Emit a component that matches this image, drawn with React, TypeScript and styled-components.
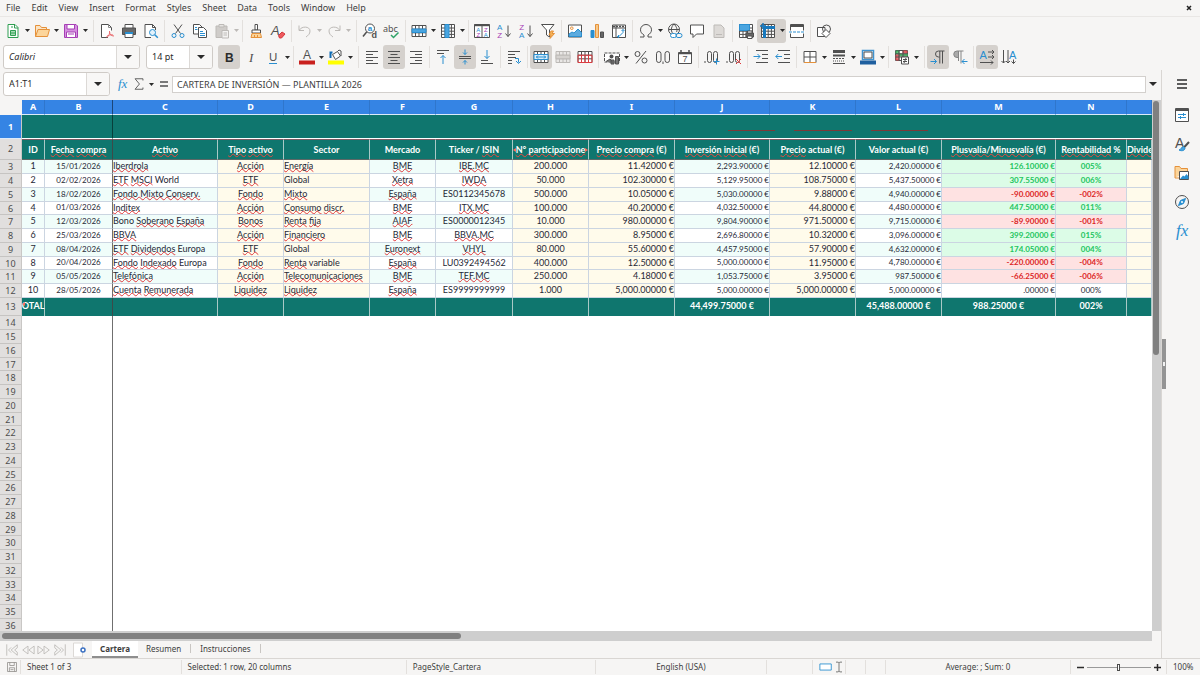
import React from "react";
import styled, { createGlobalStyle, css } from "styled-components";

const C = {
  chrome: "#f6f5f4",
  line: "#d9d6d3",
  ink: "#3d3d3d",
  teal: "#0f766e",
  blue: "#3584e4",
  held: "#d5d1cd",
  k: "#505050",
  b: "#2a8fd0",
  grid: "#cbd5e1",
};

const GlobalStyle = createGlobalStyle`
  * { box-sizing: border-box; }
  html, body, #root { height: 100%; margin: 0; }
  body { background: ${C.chrome}; overflow: hidden; }
  button, input, select { font: inherit; color: inherit; }
`;

const Window = styled.div`
  display: flex;
  flex-direction: column;
  height: 100%;
  background: ${C.chrome};
  color: ${C.ink};
  font: 9px/12px "Noto Sans", sans-serif;
`;

/* ---------- menu bar ---------- */
const MenuBar = styled.nav`
  display: flex;
  align-items: center;
  gap: 11px;
  height: 17px;
  padding: 0 5px 0 6px;
  border-bottom: 1px solid #e9e7e5;
`;
const MenuButton = styled.button`
  padding: 0;
  border: 0;
  background: none;
`;
const CloseButton = styled(MenuButton)`
  margin-left: auto;
  width: 12px;
  height: 12px;
  display: grid;
  place-items: center;
`;

/* ---------- toolbars ---------- */
const Toolbar = styled.div<{ $h: number }>`
  display: flex;
  align-items: center;
  flex: none;
  height: ${(p) => p.$h}px;
  padding-left: 2px;
`;
const ToolButton = styled.button<{ $held?: boolean }>`
  display: grid;
  place-items: center;
  flex: none;
  width: 22px;
  height: 24px;
  padding: 0;
  border: 0;
  border-radius: 3px;
  background: ${(p) => (p.$held ? C.held : "none")};
`;
const CaretButton = styled(ToolButton)`
  width: 7px;
`;
const Joined = styled.span<{ $held?: boolean }>`
  display: flex;
  flex: none;
  border-radius: 3px;
  background: ${(p) => (p.$held ? C.held : "none")};
`;
const Divider = styled.span<{ $wide?: boolean }>`
  flex: none;
  width: ${(p) => (p.$wide ? 7 : 5)}px;
  height: 22px;
  padding-left: ${(p) => (p.$wide ? 4 : 2)}px;
  &::before {
    content: "";
    display: block;
    width: 1px;
    height: 100%;
    background: #e3e0dd;
  }
`;
const Combo = styled.label<{ $w: number }>`
  display: flex;
  flex: none;
  width: ${(p) => p.$w}px;
  height: 24px;
  margin: 0 5px 0 1px;
  border: 1px solid #cfcbc7;
  border-radius: 3px;
  background: #fff;
  overflow: hidden;
`;
const comboField = css`
  flex: 1;
  min-width: 0;
  border: 0;
  outline: 0;
  padding: 0 5px;
  background: none;
  color: #2b2b2b;
  appearance: none;
`;
const ComboSelect = styled.select<{ $italic?: boolean }>`
  ${comboField}
  font-style: ${(p) => (p.$italic ? "italic" : "normal")};
`;
const ComboInput = styled.input`
  ${comboField}
`;
const ComboArrow = styled.span`
  display: grid;
  place-items: center;
  width: 23px;
  border-left: 1px solid #dcd9d6;
  background: #f8f7f6;
`;

/* ---------- body ---------- */
const Body = styled.div`
  display: flex;
  flex: 1;
  min-height: 0;
`;
const Main = styled.main`
  display: flex;
  flex-direction: column;
  flex: 1;
  min-width: 0;
  border-right: 1px solid ${C.line};
`;
const FormulaBar = styled.div`
  display: flex;
  align-items: center;
  flex: none;
  height: 30px;
  padding: 0 1px 2px 2px;
`;
const FormulaButton = styled(ToolButton)<{ $w: number }>`
  width: ${(p) => p.$w}px;
`;
const FormulaInput = styled.input`
  flex: 1;
  min-width: 0;
  height: 17px;
  padding: 0 4px;
  border: 1px solid #d3d0cd;
  outline: 0;
  background: #fff;
`;
const SheetArea = styled.div`
  display: flex;
  flex: 1;
  min-height: 0;
`;
const SheetClip = styled.div`
  flex: 1;
  min-width: 0;
  overflow: hidden;
  background: #fff;
`;
const VerticalBar = styled.div`
  flex: none;
  width: 9px;
  padding: 1px 2px 0 1px;
  background: #cecece;
`;
const VerticalThumb = styled.div`
  height: 48%;
  border-radius: 3px;
  background: #808080;
`;
const HorizontalBar = styled.div`
  flex: none;
  height: 10px;
  margin-right: 9px;
  padding: 2px;
  background: #cecece;
`;
const HorizontalThumb = styled.div`
  width: 40%;
  height: 6px;
  border-radius: 3px;
  background: #808080;
`;

/* ---------- sheet ---------- */
const Sheet = styled.table`
  width: 100%;
  table-layout: fixed;
  border-collapse: separate;
  border-spacing: 0;
  font: 9px/12px Lato, sans-serif;
  color: #1f2937;
  td, th { padding: 0; white-space: nowrap; }
`;
const ColumnRow = styled.tr`
  height: 15px;
`;
const Corner = styled.td`
  background: ${C.chrome};
`;
const ColumnHead = styled.th<{ $frozen?: boolean }>`
  font: bold 9px/14px "Noto Sans", sans-serif;
  color: #fff;
  background: ${C.blue};
  border-bottom: 1px solid #dcebfb;
  border-right: 1px solid ${(p) => (p.$frozen ? "#1c4679" : "#2f76cc")};
`;
const RowHead = styled.th<{ $active?: boolean }>`
  font: ${(p) => (p.$active ? "bold" : "normal")} 9px/12px "Noto Sans", sans-serif;
  color: ${(p) => (p.$active ? "#fff" : "#4d4d4d")};
  background: ${(p) => (p.$active ? C.blue : "#e1dfde")};
  border-right: 1px solid #c9c7c5;
  border-bottom: 1px solid ${(p) => (p.$active ? "#dcebfb" : "#c6c4c2")};
`;
const TitleRow = styled.tr`
  height: 24px;
`;
const TitleCell = styled.td<{ $frozen?: boolean }>`
  background: ${C.teal};
  border-bottom: 1px solid #fff;
  ${(p) => p.$frozen && "border-right: 1px solid #083f3b;"}
`;
const TitleMarks = styled.div`
  display: flex;
  justify-content: flex-end;
  gap: 19px;
  padding: 8px 224px 0 0;
`;
const TitleMark = styled.span<{ $w: number }>`
  width: ${(p) => p.$w}px;
  border-bottom: 1px solid #7d3a38;
`;
const HeadRow = styled.tr`
  height: 21px;
`;
const HeadCell = styled.th<{ $frozen?: boolean; $start?: boolean }>`
  overflow: hidden;
  color: #fff;
  background: ${C.teal};
  border-top: 1px solid #7f5a62;
  border-bottom: 1px solid #5d6866;
  border-right: 1px solid ${(p) => (p.$frozen ? "#3d4a49" : "#a9c9c6")};
  text-align: ${(p) => (p.$start ? "left" : "center")};
`;
const DataBody = styled.tbody`
  tr { height: 14px; }
  tr:nth-child(4n) { height: 13px; }
  tr:nth-child(4n) td, tr:nth-child(4n) th { line-height: 11px; }
`;
const DataCell = styled.td<{
  $bg: string;
  $align: string;
  $small?: boolean;
  $bold?: boolean;
  $color?: string;
  $frozen?: boolean;
}>`
  overflow: hidden;
  background: ${(p) => p.$bg};
  text-align: ${(p) => p.$align};
  vertical-align: top;
  font-size: ${(p) => (p.$small ? 8 : 9)}px;
  font-weight: ${(p) => (p.$bold ? "bold" : "normal")};
  color: ${(p) => p.$color ?? "inherit"};
  border-right: 1px solid ${(p) => (p.$frozen ? "#6f6f6f" : C.grid)};
  border-bottom: 1px solid ${C.grid};
`;
const TotalRow = styled.tr`
  height: 18px;
`;
const TotalCell = styled.td<{ $frozen?: boolean }>`
  color: #fff;
  background: ${C.teal};
  border-right: 1px solid ${(p) => (p.$frozen ? "#3d4a49" : "#a9c9c6")};
  text-align: center;
  font-weight: bold;
  line-height: 16px;
  vertical-align: top;
`;
const EmptyCell = styled.td<{ $frozen?: boolean }>`
  ${(p) => p.$frozen && "border-right: 1px solid #6f6f6f;"}
`;
const Misspelt = styled.span`
  text-decoration: underline wavy #e0383b 1px;
  text-decoration-skip-ink: none;
  text-underline-offset: -1px;
  ${HeadCell} & {
    text-decoration-color: #f0483f;
    text-underline-offset: 0;
  }
`;
const Clipped = styled.div`
  position: relative;
  display: flex;
  justify-content: center;
`;
const ClipMark = styled.svg<{ $end?: boolean }>`
  position: absolute;
  top: 4px;
  ${(p) => (p.$end ? "right: 0; transform: scaleX(-1);" : "left: 0;")}
`;

/* ---------- tabs ---------- */
const Tabs = styled.div`
  display: flex;
  align-items: stretch;
  flex: none;
  height: 17px;
  padding-left: 4px;
  font-size: 8px;
`;
const TabNav = styled.button<{ $w: number }>`
  display: grid;
  place-items: center;
  width: ${(p) => p.$w}px;
  padding: 0;
  border: 0;
  background: none;
`;
const Tab = styled.button<{ $active?: boolean }>`
  padding: 0 8px;
  border: 0;
  border-bottom: 2px solid ${(p) => (p.$active ? "#8e8e8e" : "transparent")};
  background: ${(p) => (p.$active ? "#fff" : "none")};
  font-weight: ${(p) => (p.$active ? "bold" : "normal")};
  line-height: 13px;
`;
const TabLine = styled.span`
  width: 1px;
  height: 9px;
  margin: 3px 1px 0;
  background: #c9c6c3;
`;

/* ---------- sidebar ---------- */
const Sidebar = styled.aside`
  display: flex;
  flex: none;
  width: 38px;
`;
const Grip = styled.span`
  align-self: center;
  display: grid;
  place-items: center;
  width: 4px;
  height: 50px;
  background: #949494;
  &::before {
    content: "";
    width: 2px;
    height: 4px;
    background: #f2f2f2;
  }
`;
const SidebarButtons = styled.div`
  display: flex;
  flex-direction: column;
  align-items: center;
  flex: 1;
  gap: 5px;
  padding: 2px 6px 0 4px;
  button:first-child { margin-bottom: 2px; }
`;

/* ---------- status bar ---------- */
const StatusBar = styled.footer`
  display: flex;
  align-items: center;
  flex: none;
  height: 17px;
  border-top: 1px solid ${C.line};
  font-size: 8px;
`;
const StatusItem = styled.div<{ $grow?: number; $w?: number; $center?: boolean }>`
  display: flex;
  align-items: center;
  justify-content: ${(p) => (p.$center ? "center" : "flex-start")};
  flex: ${(p) => (p.$grow ? `${p.$grow} 1 0` : `0 0 ${p.$w}px`)};
  height: 14px;
  padding-left: ${(p) => (p.$center ? 0 : 6)}px;
  border-right: 1px solid #e3e0dd;
  white-space: nowrap;
  &:last-child { border-right: 0; }
`;
const ZoomButton = styled.button`
  display: grid;
  place-items: center;
  width: 13px;
  height: 12px;
  padding: 0;
  border: 0;
  background: none;
`;
const ZoomSlider = styled.input`
  appearance: none;
  width: 64px;
  height: 10px;
  margin: 0;
  background: linear-gradient(#9a9a9a, #9a9a9a) center / 100% 1px no-repeat;
  &::-webkit-slider-thumb {
    appearance: none;
    width: 3px;
    height: 7px;
    border: 1px solid #4d4d4d;
    background: #fff;
  }
`;

/* ---------- icons ---------- */
const Drawing = styled.svg`
  display: block;
  overflow: visible;
`;

const O = "#e5913a";
const P = "#a63fb5";
const G = "#bdbab7";

const gridLines = "M1 2.5h14v11H1zM1 6.2h14M1 9.8h14M4.5 2.5v11M8 2.5v11M11.5 2.5v11";
const sheetGrid = "M1.5 1.5h13v13h-13zM1.5 5h13M1.5 8.2h13M1.5 11.4h13M5 1.5v13M8.2 1.5v13M11.4 1.5v13";

const glyph = (x: number, y: number, s: string, size: number, fill: string, extra: object = {}) => (
  <text x={x} y={y} fontSize={size} fill={fill} stroke="none" fontFamily="Liberation Sans, sans-serif" {...extra}>
    {s}
  </text>
);

const art: Record<string, React.ReactNode> = {
  newDoc: (<g stroke="#2f9e52"><path d="M3 1.5h7l3 3v10H3z" fill="#fff" /><path d="M9.5 1.5V5H13" /><path d="M5.5 7.5h5v5h-5zM5.5 10h5" fill="#a7dcb5" /><path d="M6 4h2" /></g>),
  open: (<g stroke={O}><path d="M1.5 13.5V2.5h4.5l1.500 2h5v2" fill="#fbe3c3" /><path d="M1.500 13.500l2.500-7h11.500l-2 7z" fill="#fcd59b" /></g>),
  save: (<g stroke={P}><path d="M1.500 1.500h11.500l1.500 1.500v11.500h-13z" fill="#d58fe0" /><path d="M4 1.500h7.500v4.500H4z" fill="#fff" /><path d="M3.500 9h9v5.500h-9z" fill="#fff" /><path d="M5 11h6" /></g>),
  pdf: (<g stroke={C.k}><path d="M9 14.500H2.500v-13h7l3 3v3" fill="#fff" /><path d="M9.500 1.500v3h3" stroke="#8a8a8a" /><path d="M8 14.500c2-2 3-4 2.500-6.500M10.500 8.500c0 3 2 4.500 4.500 4.500M7.500 13.500c2-1.500 4-2 6.500-1.500" stroke="#ea6a6e" /></g>),
  print: (<g stroke={C.k}><path d="M4 5V1.500h8V5" fill="#fff" /><path d="M1.500 5h13v6.500h-13z" fill="#686868" /><path d="M4 9.500h8v5H4z" fill="#fff" /><path d="M4 10h8" stroke={C.b} strokeWidth="2" /></g>),
  preview: (<g stroke={C.k}><path d="M8 14.500H2v-13h7.500l3 3V7" fill="#fff" /><path d="M9.500 1.500v3h3" /><circle cx="9.500" cy="9.500" r="3" stroke={C.b} fill="#e3f2fc" /><path d="M11.800 11.800l3 3" stroke={C.b} strokeWidth="1.500" /></g>),
  cut: (<g><path d="M4 1.500l6.500 9M12 1.500l-6.500 9" stroke={C.k} /><circle cx="4" cy="12.500" r="2" stroke={C.b} /><circle cx="12" cy="12.500" r="2" stroke={C.b} /></g>),
  copy: (<g stroke={C.k}><path d="M1.500 1.500h6l2.500 2.500v7h-8.500z" fill="#fff" /><path d="M6.500 4.500h5l3 3v7h-8z" fill="#fff" /><path d="M3 4.500h2M3 6.500h2.500M8 8.500h3M8 10.500h5M8 12.500h5" stroke={C.b} /></g>),
  paste: (<g stroke={G}><path d="M2 3h11v11.500H2z" fill="#cfccc9" /><path d="M5 1.500h5v2.500H5z" fill="#e6e4e2" /><path d="M8 7.500h6.500v7.500H8z" fill="#f3f2f1" /><path d="M9.500 10h3.500M9.500 12h3.500" /></g>),
  brush: (<g stroke={C.k}><path d="M7 1.500h2.500v5.500H7z" fill="#fff" /><path d="M4 7h8.500v3H4z" fill="#fff" /><path d="M4 10.500h8.500l1 4H3z" fill="#fbd49a" stroke={O} /><path d="M6.500 12v2.500M9.500 12v2.500" stroke={O} /></g>),
  clear: (<g>{glyph(1, 12, "A", 13, C.k, { fontStyle: "italic" })}<path d="M8.500 12.500l3.500-3.500 3 2-3.500 4h-2z" fill="#ef5a5e" stroke="#d2383c" /></g>),
  undo: (<path d="M2 2.500v5h5M2.500 7c2-4 10.500-4 10.500 1 0 3-2 4.500-4 6" stroke={G} />),
  redo: (<path d="M14 2.500v5H9M13.500 7C11.500 3 3 3 3 8c0 3 2 4.500 4 6" stroke={G} />),
  find: (<g><circle cx="8" cy="5.500" r="4.500" stroke={C.k} fill="#fff" /><path d="M4.800 8.800L1 13.500" stroke={C.k} strokeWidth="1.500" />{glyph(5.8, 8, "a", 8, C.b, { fontWeight: 700 })}{glyph(9.5, 15, "d", 9, C.k, { fontWeight: 700 })}</g>),
  spell: (<g>{glyph(-1, 9, "abc", 9, C.k, { fontFamily: "Noto Sans, sans-serif" })}<path d="M7 12l2.500 2.500 5-5" stroke="#2fa368" strokeWidth="1.500" /></g>),
  rows: (<g stroke={C.k}><path d={gridLines} fill="#fff" /><path d="M1 6h14v3.500H1z" fill="#4aa5e0" stroke={C.b} /></g>),
  cols: (<g stroke={C.k}><path d={sheetGrid} fill="#fff" /><path d="M5 1.500h4v13H5z" fill="#4aa5e0" stroke={C.b} /></g>),
  sort: (<g><path d="M.5 1.500h15v13H.5zM8 1.500v13" stroke={C.k} fill="#fff" /><path d="M.5 2.200h15" stroke={C.k} strokeWidth="2" />{glyph(2.200, 8.500, "A", 6, C.b)}{glyph(2.400, 14, "Z", 6, P)}{glyph(9.900, 8.500, "Z", 6, P)}{glyph(9.700, 14, "A", 6, C.b)}</g>),
  asc: (<g>{glyph(1, 7, "A", 8, C.b)}{glyph(1.300, 15, "Z", 8, P)}<path d="M12 2.500v11M9.500 10.500l2.500 3 2.500-3" stroke={C.k} /></g>),
  desc: (<g>{glyph(1.300, 7, "Z", 8, P)}{glyph(1, 15, "A", 8, C.b)}<path d="M12 2.500v11M9.500 10.500l2.500 3 2.500-3" stroke={C.k} /></g>),
  filter: (<g><path d="M1.500 1.500h12.500l-4.500 5.500v7l-3-2V7z" stroke={C.k} fill="#fff" /><path d="M11 8l-2 4h2l-1 3.500 4.500-5h-2.500l1.500-2.500z" fill="#f5b55a" stroke={O} /></g>),
  image: (<g><path d="M1.500 2h13v12h-13z" stroke={C.k} fill="#fff" /><circle cx="4.800" cy="5.200" r="1.300" stroke={O} /><path d="M2 13.500V11l3-2 2 1 4-4 3.500 3.500v4z" fill="#5cabdf" stroke={C.b} /></g>),
  chart: (<g><path d="M2 7.500h3v7H2z" fill={C.b} stroke={C.b} /><path d="M6.500 1.500h3v13h-3z" fill="#f8c98a" stroke={O} /><path d="M11.500 9h3v5.500h-3z" fill="#666" stroke={C.k} /></g>),
  pivot: (<g stroke={C.k}><path d="M1.500 2h13v12.500h-13zM1.500 5h13M5 2v12.500" fill="#fff" /><path d="M2 3.500h12" strokeWidth="1.500" strokeDasharray="2 1" /><path d="M12 6.500v3l-4 4H6.500M10.500 8l1.500-1.500L13.500 8M8 12l-1.500 1.500L8 15" stroke={C.b} /></g>),
  omega: (<path d="M2 14h4v-2C3.800 10.800 2.500 9 2.500 6.800a5.500 5.300 0 0 1 11 0c0 2.200-1.300 4-3.500 5.200v2h4" stroke={C.k} />),
  link: (<g><circle cx="7" cy="6.500" r="5.500" stroke={C.k} /><path d="M1.500 6.500h11M7 1c-3.500 3.500-3.500 7.500 0 11M7 1c3 3 3.500 6 2.500 8" stroke={C.k} /><rect x="3.500" y="10.500" width="6" height="4" rx="2" stroke={C.b} fill="#fff" /><rect x="9" y="10.500" width="6" height="4" rx="2" stroke={C.b} /></g>),
  comment: (<path d="M1.500 2h13v9H7.500l-3.500 3.500V11H1.500z" stroke={C.k} fill="#fff" />),
  header: (<path d="M3 2h7l3 3v9.500H3zM5 11.500h6" stroke={G} fill="#dddad7" />),
  printArea: (<g stroke={C.k}><path d={sheetGrid} fill="#fff" /><path d="M1.500 1.500h10v6h-10z" fill="#4aa5e0" stroke={C.b} /><path d="M8 10h7.500v4H8z" fill="#666" /><path d="M9.500 8h4.500v2H9.500zM9.500 13h4.500v2.500H9.500z" fill="#fff" /></g>),
  freeze: (<g stroke={C.k}><path d={sheetGrid} fill="#fff" /><path d="M4 4.500h11M4.500 4v11" stroke="#1778bd" strokeWidth="3" /><path d="M3 0v6M0 3h6" stroke="#1778bd" strokeWidth="1.500" /></g>),
  split: (<g stroke={C.k}><path d="M1.500 1.500h13v13h-13z" fill="#fff" /><path d="M1.500 3h13" strokeWidth="2" /><path d="M0 9h16" stroke="#fff" strokeWidth="3" /><path d="M0 9h16" stroke={C.b} strokeDasharray="3 1" /></g>),
  shapes: (<g stroke={C.k}><path d="M1.500 4.500h7.500v9H1.500z" fill="#fff" /><circle cx="10.500" cy="6" r="4" /><path d="M10 6.500l4 4-4 4-4-4z" fill="#fff" /></g>),
  bold: glyph(4, 12.500, "B", 12, "#2b2b2b", { fontWeight: 700 }),
  italic: glyph(6, 12.500, "I", 13, C.k, { fontStyle: "italic", fontFamily: "Liberation Serif, serif" }),
  underline: (<g>{glyph(4, 11.500, "U", 11.500, C.k)}<path d="M4 14.500h8" stroke={C.b} /></g>),
  fontColor: (<g>{glyph(4, 10, "A", 12, C.k)}<path d="M0 11.500h16v4H0z" fill="#c9211e" /></g>),
  highlight: (<g><path d="M0 11.500h16v4H0z" fill="#ff0" /><path d="M2.500 9V3.500h2" stroke="#0f6cb5" strokeWidth="2" /><path d="M4.500 5.500l5-3 3 4.500-5 3.500zM9.500 2.500l1.500-1.500 2 1v5" stroke={C.k} fill="#fff" /></g>),
  left: (<path d="M2 2.500h12M2 5.500h7M2 8.500h12M2 11.500h7M2 14.500h12" stroke={C.k} />),
  center: (<path d="M2 2.500h12M4.500 5.500h7M2 8.500h12M4.500 11.500h7M2 14.500h12" stroke={C.k} />),
  right: (<path d="M2 2.500h12M7 5.500h7M2 8.500h12M7 11.500h7M2 14.500h12" stroke={C.k} />),
  top: (<g><path d="M2 1.500h12M2 4.500h7" stroke={C.k} /><path d="M8 15V6.500M5.500 9L8 6.500 10.500 9" stroke={C.b} /></g>),
  middle: (<g><path d="M2 7.500h12M2 9.500h12" stroke={C.k} /><path d="M8 .500v5M6 3.500l2 2 2-2M8 15.500v-4M6 13.500l2-2 2 2" stroke={C.b} /></g>),
  bottom: (<g><path d="M2 14.500h12M2 11.500h7" stroke={C.k} /><path d="M8 1v8.500M5.500 7L8 9.500 10.500 7" stroke={C.b} /></g>),
  wrap: (<g><path d="M2 2.500h12M2 5.500h7M2 8.500h8M2 11.500h4M2 14.500h4" stroke={C.k} /><path d="M9 9.500h3.500v4M10 12l2.500 2.500L15 12" stroke={C.b} /></g>),
  merge: (<g stroke={C.k}><path d={gridLines} fill="#fff" /><path d="M1 5.500h14v5H1z" fill="#d8edfa" stroke={C.b} /><path d="M3 8h10M5 6.500L3.500 8 5 9.500M11 6.500L12.500 8 11 9.500" stroke={C.b} /></g>),
  unmerge: (<g stroke={G}><path d={gridLines} fill="#e9e7e5" /><path d="M1 6.200h14v3.600H1z" fill="#d5d2cf" /></g>),
  splitCell: (<g stroke={C.k}><path d={gridLines} fill="#fff" /><path d="M1 6.200h14v7.300H1zM4.500 6.200v7.300M8 6.200v7.300M11.500 6.200v7.300" stroke="#dd3c41" /></g>),
  currency: (<g><path d="M.5 4h15v9H.5z" fill="#fff" stroke={C.k} strokeDasharray="3 1" /><circle cx="7.500" cy="7.500" r="2" fill={C.k} /><path d="M2 12.500l4-2.500 2 2V14M7 11h3v4H7zM11.500 7.500h3v7.500h-3z" fill="#777" stroke={C.k} /></g>),
  percent: (<g stroke={C.k}><path d="M13 2L3 14.500" /><circle cx="4.500" cy="5" r="2.500" /><circle cx="11.500" cy="11.500" r="2.500" /></g>),
  number: (<g stroke={C.k}><rect x="1.500" y="2.500" width="4.500" height="11" rx="2.250" /><rect x="10" y="2.500" width="4.500" height="11" rx="2.250" /><path d="M8 12.500v2.500" /></g>),
  date: (<g><path d="M1.500 3.500h13v11h-13z" stroke={C.k} fill="#fff" /><path d="M1.500 4.500h13M4 1v3M12 1v3" stroke={C.k} strokeWidth="1.500" />{glyph(5.500, 13, "7", 9, C.k)}</g>),
  addDec: (<g stroke={C.k}><path d="M1 12v2" /><rect x="3.500" y="2.500" width="4" height="11" rx="2" /><rect x="9.500" y="2.500" width="4" height="11" rx="2" /><path d="M12.500 9.500v6M9.500 12.500h6" stroke={C.b} /></g>),
  delDec: (<g stroke={C.k}><path d="M1 12v2" /><rect x="3.500" y="2.500" width="4" height="11" rx="2" /><rect x="9.500" y="2.500" width="4" height="11" rx="2" /><path d="M10 10l5 5M15 10l-5 5" stroke="#e0383b" /></g>),
  indent: (<g><path d="M3 1.500h12M9 5.500h6M9 9.500h6M3 13.500h12" stroke={C.k} /><path d="M.5 7.500h6.500M4.500 5L7 7.500 4.500 10" stroke={C.b} /></g>),
  outdent: (<g><path d="M3 1.500h12M9 5.500h6M9 9.500h6M3 13.500h12" stroke={C.k} /><path d="M7 7.500H.800M3.300 5L.800 7.500 3.300 10" stroke={C.b} /></g>),
  borders: (<g stroke={C.k}><path d="M2 2.500h12v11H2zM8 2.500v11M2 8h12" fill="#fff" /><path d="M2 13.500h12" stroke={O} /></g>),
  lineStyle: (<g stroke={C.k}><path d="M2 2.500h12" strokeWidth="3" /><path d="M2 6.500h12" strokeWidth="2" /><path d="M2 9.500h12" strokeDasharray="2 1" /><path d="M2 12h12" strokeDasharray="1 1" /><path d="M2 14.500h12" /></g>),
  lineColor: (<g><path d="M2.500 1.500h11v9h-11z" stroke="#3f93cf" strokeWidth="1.500" fill="#fff" /><path d="M4 3h8v6H4z" stroke={C.k} /><path d="M0 11.500h16v4H0z" fill="#1f5f9f" /></g>),
  conditional: (<g stroke={C.k}><path d="M1.500 1.500h12v10h-12z" fill="#fff" /><path d="M2 2h3v3H2zM5 5h8.500v2H5z" fill="#63c37a" stroke="#3d9e56" /><path d="M2 6h3v5H2zM9 2h4v2H9z" fill="#ee7479" stroke="#d2494e" /><path d="M5 1.500v10M9 1.500v10M1.500 4.800h12M1.500 8h12" /><path d="M7.500 8h7v7h-7z" fill="#fff" /><path d="M9 10.500h4M9 12.500h4M12 9l-2 5" /></g>),
  ltr: (<g><path d="M14.500 2H8.500a3 3 0 0 0 0 6h1M9.800 2v12.500M12.500 2v12.500" stroke={C.k} /><path d="M.5 12.500h6M4 10l2.500 2.500L4 15" stroke={C.b} /></g>),
  rtl: (<g><path d="M11.500 2H5a3 3 0 0 0 0 6.500h1.500V2M9 2v12.500M6.500 2v10" stroke="#858585" fill="#aaa" /><path d="M15.500 12.500H10M12.500 10L10 12.500l2.500 2.500" stroke={C.b} /></g>),
  horizontal: (<g>{glyph(.5, 10, "A", 11, C.b)}<path d="M9 3h6M13 1l2 2-2 2M9 8h6M13 6l2 2-2 2M1 13.500h13M12 11.500l2 2-2 2" stroke={C.k} /></g>),
  vertical: (<g>{glyph(8, 10, "A", 11, C.b)}<path d="M2.500 1v13M.500 12l2 2 2-2M7 1v13M5 12l2 2 2-2M12.500 10.500v4M10.500 12.500l2 2 2-2" stroke={C.k} /></g>),
  fx: glyph(3, 12, "fx", 13, C.b, { fontStyle: "italic", fontFamily: "Liberation Serif, serif" }),
  sum: (<path d="M12.500 4V2H3.500l5 6-5 6h9v-2" stroke={C.k} />),
  equals: (<path d="M4 6h8M4 10h8" stroke={C.k} strokeWidth="1.500" />),
  menu: (<path d="M3 4h10M3 8h10M3 12h10" stroke="#2b2b2b" strokeWidth="1.500" />),
  props: (<g><path d="M1.500 1.500h13v13h-13z" stroke={C.k} fill="#fff" /><path d="M1.500 3h13" stroke={C.k} strokeWidth="2" /><path d="M4 7.500h8M4 10.500h8M9.500 6v3M6.500 9v3" stroke={C.b} /></g>),
  styles: (<g>{glyph(1, 11.500, "A", 14, C.k)}<path d="M15 6l-5.500 6" stroke={C.k} strokeWidth="2" /><path d="M9.500 10.500c-2 0-2 3-4.500 3.500 3 1.500 6 .5 6-2z" fill="#4aa5e0" stroke={C.b} /></g>),
  gallery: (<g><path d="M1 13V1.500h4.500l1.500 2h6.500V6M1 13h4" stroke={O} fill="#fbd49a" /><path d="M5.500 6.500h9v8h-9z" stroke={C.k} fill="#fff" /><path d="M6 14l3-3.500 1.500 1 2-2.500 2 2.500V14z" fill={C.b} /></g>),
  navigator: (<g><circle cx="8" cy="8" r="6.500" stroke={C.k} /><path d="M11.500 4.500L9.500 9.500 4.500 11.500 6.500 6.500z" fill="#2a8fd0" stroke={C.b} /><circle cx="8" cy="8" r="1" fill="#fff" stroke="none" /></g>),
  functions: glyph(2, 12.500, "fx", 17, C.b, { fontStyle: "italic", fontFamily: "Liberation Serif, serif" }),
  first: (<path d="M2 1.500v13M14 2L7 8l7 6v-3.500L11 8l3-2.500zM7 5L4 8l3 3" stroke={G} />),
  prev: (<path d="M8 3.500L2 8l6 4.500zM15 3.500L9 8l6 4.500z" stroke={G} />),
  next: (<path d="M1 3.500L7 8l-6 4.500zM8 3.500L14 8l-6 4.500z" stroke={G} />),
  last: (<path d="M14 1.500v13M2 2l7 6-7 6v-3.500L5 8 2 5.500zM9 5l3 3-3 3" stroke={G} />),
  addSheet: (<g><path d="M1.500 1h9v14h-9z" fill="#fff" stroke="#dcd9d6" /><circle cx="11" cy="8" r="2" stroke="#3a70c2" strokeWidth="1.500" fill="#fff" /></g>),
  saved: (<g stroke="#8b8885"><path d="M2 2h12v12H2zM5 2v4h6V2M4.500 14V9h7v5" /><path d="M6 11.500h4" /></g>),
  selection: (<path d="M1 4.500h13v7H1z" stroke={C.b} fill="#fff" />),
  cursor: (<path d="M4 1.500h3l1 1 1-1h3M8 2.500v11M4 14.500h3l1-1 1 1h3" stroke={C.k} />),
};

const Icon = ({ name, size = 16 }: { name: string; size?: number }) => (
  <Drawing width={size} height={size} viewBox="0 0 16 16" fill="none" aria-hidden="true">
    {art[name]}
  </Drawing>
);

const Caret = ({ dim, big }: { dim?: boolean; big?: boolean }) => (
  <svg width={big ? 8 : 5} height={big ? 4 : 3} viewBox="0 0 8 4" preserveAspectRatio="none" aria-hidden="true">
    <path d="M0 0h8L4 4z" fill={dim ? G : "#2b2b2b"} />
  </svg>
);

type Tool = [icon: string, label: string, flags?: string];

// flags: d = has a drop-down, h = held down, x = disabled; "|" is a divider, "||" a wide one
const standardTools: (Tool | string)[] = [
  ["newDoc", "New", "d"], ["open", "Open", "d"], ["save", "Save", "d"], "||",
  ["pdf", "Export as PDF"], ["print", "Print"], ["preview", "Print preview"], "|",
  ["cut", "Cut"], ["copy", "Copy"], ["paste", "Paste", "dx"], "|",
  ["brush", "Clone formatting"], ["clear", "Clear formatting"], "|",
  ["undo", "Undo", "dx"], ["redo", "Redo", "dx"], "||",
  ["find", "Find and replace"], ["spell", "Spelling"], "|",
  ["rows", "Row", "d"], ["cols", "Column", "d"], "|",
  ["sort", "Sort"], ["asc", "Sort ascending"], ["desc", "Sort descending"], ["filter", "AutoFilter"], "|",
  ["image", "Insert image"], ["chart", "Insert chart"], ["pivot", "Pivot table"], "|",
  ["omega", "Special character", "d"], ["link", "Hyperlink"], ["comment", "Comment"], ["header", "Headers and footers", "x"], "|",
  ["printArea", "Print area"], ["freeze", "Freeze rows and columns", "dh"], ["split", "Split window"], "|",
  ["shapes", "Show draw functions"],
];
const formattingTools: (Tool | string)[] = [
  ["bold", "Bold", "h"], ["italic", "Italic"], ["underline", "Underline", "d"], "|",
  ["fontColor", "Font color", "d"], ["highlight", "Highlighting", "d"], "||",
  ["left", "Align left"], ["center", "Center horizontally", "h"], ["right", "Align right"], "|",
  ["top", "Align top"], ["middle", "Center vertically", "h"], ["bottom", "Align bottom"], "|",
  ["wrap", "Wrap text"], "|",
  ["merge", "Merge and center", "h"], ["unmerge", "Merge cells", "x"], ["splitCell", "Unmerge cells"], "|",
  ["currency", "Currency", "d"], ["percent", "Percent"], ["number", "Number"], ["date", "Date"], "|",
  ["addDec", "Add decimal place"], ["delDec", "Delete decimal place"], "|",
  ["indent", "Increase indent"], ["outdent", "Decrease indent"], "|",
  ["borders", "Borders", "d"], ["lineStyle", "Border style", "d"], ["lineColor", "Border color", "d"], "|",
  ["conditional", "Conditional formatting", "d"], "||",
  ["ltr", "Left-to-right", "h"], ["rtl", "Right-to-left"], "|",
  ["horizontal", "Text direction left to right", "h"], ["vertical", "Text direction top to bottom"],
];

const Tools = ({ items }: { items: (Tool | string)[] }) => (
  <>
    {items.map((item, i) => {
      if (typeof item === "string") return <Divider key={i} $wide={item === "||"} />;
      const [icon, label, flags = ""] = item;
      const off = flags.includes("x");
      return (
        <Joined key={i} $held={flags.includes("h")}>
          <ToolButton aria-label={label} disabled={off}>
            <Icon name={icon} />
          </ToolButton>
          {flags.includes("d") && (
            <CaretButton aria-label={`${label} options`} disabled={off}>
              <Caret dim={off} />
            </CaretButton>
          )}
        </Joined>
      );
    })}
  </>
);

/* ---------- data ---------- */
const columnWidths = [22, 23, 68, 105, 66, 86, 66, 77, 76, 86, 95, 86, 86, 114, 71];
const letters = "ABCDEFGHIJKLMN".split("");

// Braces mark the words that the spelling checker underlines.
const heads = [
  "ID", "{Fecha} {compra}", "{Activo}", "{Tipo} {activo}", "Sector", "Mercado", "Ticker / {ISIN}", "{N° participacione}",
  "{Precio} {compra} (€)", "{Inversión} {inicial} (€)", "{Precio} actual (€)", "Valor actual (€)",
  "{Plusvalía/Minusvalía} (€)", "{Rentabilidad} %", "{Divide}",
];
const rows = [
  ["1", "15/01/2026", "{Iberdrola}", "{Acción}", "{Energía}", "{BME}", "{IBE.MC}", "200.000", "11.42000 €", "2,293.90000 €", "12.10000 €", "2,420.00000 €", "126.10000 €", "005%"],
  ["2", "02/02/2026", "{ETF} {MSCI} World", "{ETF}", "Global", "{Xetra}", "{IWDA}", "50.000", "102.30000 €", "5,129.95000 €", "108.75000 €", "5,437.50000 €", "307.55000 €", "006%"],
  ["3", "18/02/2026", "{Fondo Mixto Conserv.}", "{Fondo}", "{Mixto}", "{España}", "ES0112345678", "500.000", "10.05000 €", "5,030.00000 €", "9.88000 €", "4,940.00000 €", "-90.00000 €", "-002%"],
  ["4", "01/03/2026", "{Inditex}", "{Acción}", "{Consumo} {discr.}", "{BME}", "{ITX.MC}", "100.000", "40.20000 €", "4,032.50000 €", "44.80000 €", "4,480.00000 €", "447.50000 €", "011%"],
  ["5", "12/03/2026", "Bono {Soberano} {España}", "{Bonos}", "{Renta} {fija}", "{AIAF}", "ES0000012345", "10.000", "980.00000 €", "9,804.90000 €", "971.50000 €", "9,715.00000 €", "-89.90000 €", "-001%"],
  ["6", "25/03/2026", "{BBVA}", "{Acción}", "{Financiero}", "{BME}", "{BBVA.MC}", "300.000", "8.95000 €", "2,696.80000 €", "10.32000 €", "3,096.00000 €", "399.20000 €", "015%"],
  ["7", "08/04/2026", "{ETF} {Dividendos} Europa", "{ETF}", "Global", "{Euronext}", "{VHYL}", "80.000", "55.60000 €", "4,457.95000 €", "57.90000 €", "4,632.00000 €", "174.05000 €", "004%"],
  ["8", "20/04/2026", "{Fondo} {Indexado} Europa", "{Fondo}", "{Renta} variable", "{España}", "LU0392494562", "400.000", "12.50000 €", "5,000.00000 €", "11.95000 €", "4,780.00000 €", "-220.00000 €", "-004%"],
  ["9", "05/05/2026", "{Telefónica}", "{Acción}", "{Telecomunicaciones}", "{BME}", "{TEF.MC}", "250.000", "4.18000 €", "1,053.75000 €", "3.95000 €", "987.50000 €", "-66.25000 €", "-006%"],
  ["10", "28/05/2026", "{Cuenta} {Remunerada}", "{Liquidez}", "{Liquidez}", "{España}", "ES9999999999", "1.000", "5,000.00000 €", "5,000.00000 €", "5,000.00000 €", "5,000.00000 €", ".00000 €", "000%"],
];
const totals = ["OTAL", "", "", "", "", "", "", "", "", "44,499.75000 €", "", "45,488.00000 €", "988.25000 €", "002%", ""];

const inputColumns = [3, 4, 7, 8, 10, 14];
const smallColumns = [1, 9, 11, 12, 13];
const aligns = ["center", "center", "left", "center", "left", "center", "center", "center", "right", "right", "right", "right", "right", "center", "left"];

const Checked = ({ text }: { text: string }) => (
  <>
    {text.split(/(\{.+?\})/).map((part, i) =>
      part[0] === "{" ? <Misspelt key={i}>{part.slice(1, -1)}</Misspelt> : part
    )}
  </>
);

const TooLong = ({ end }: { end?: boolean }) => (
  <ClipMark $end={end} width="3" height="4" viewBox="0 0 3 4" aria-hidden="true">
    <path d="M3 0v4L0 2z" fill="#ff6b5e" />
  </ClipMark>
);

const cellLook = (row: number, col: number, result: string) => {
  if (inputColumns.includes(col)) return { $bg: "#fffbeb" };
  if (col >= 12 && row < 9)
    return result[0] === "-"
      ? { $bg: "#fee2e2", $color: "#dc2626", $bold: true }
      : { $bg: "#dcfce7", $color: "#22c55e", $bold: true };
  return { $bg: row % 2 === 0 ? "#f0fdfa" : "#fff" };
};

const menus = ["File", "Edit", "View", "Insert", "Format", "Styles", "Sheet", "Data", "Tools", "Window", "Help"];

export default function App() {
  return (
    <Window>
      <GlobalStyle />
      <MenuBar>
        {menus.map((m) => <MenuButton key={m}>{m}</MenuButton>)}
        <CloseButton aria-label="Close document">
          <svg width="6" height="6" viewBox="0 0 6 6"><path d="M1 1l4 4M5 1L1 5" stroke="#222" strokeWidth="1.500" /></svg>
        </CloseButton>
      </MenuBar>
      <Toolbar $h={27}><Tools items={standardTools} /></Toolbar>
      <Toolbar $h={26}>
        <Combo $w={137}>
          <ComboSelect aria-label="Font name" $italic defaultValue="Calibri"><option>Calibri</option></ComboSelect>
          <ComboArrow><Caret big /></ComboArrow>
        </Combo>
        <Combo $w={67}>
          <ComboSelect aria-label="Font size" defaultValue="14 pt"><option>14 pt</option></ComboSelect>
          <ComboArrow><Caret big /></ComboArrow>
        </Combo>
        <Tools items={formattingTools} />
      </Toolbar>
      <Body>
        <Main>
          <FormulaBar>
            <Combo $w={107}>
              <ComboInput aria-label="Name box" defaultValue="A1:T1" />
              <ComboArrow><Caret big /></ComboArrow>
            </Combo>
            <FormulaButton $w={16} aria-label="Function wizard"><Icon name="fx" /></FormulaButton>
            <FormulaButton $w={16} aria-label="Select function"><Icon name="sum" size={14} /></FormulaButton>
            <FormulaButton $w={9} aria-label="Function options"><Caret /></FormulaButton>
            <FormulaButton $w={16} aria-label="Formula"><Icon name="equals" /></FormulaButton>
            <FormulaInput aria-label="Input line" defaultValue="CARTERA DE INVERSIÓN — PLANTILLA 2026" />
            <FormulaButton $w={14} aria-label="Expand formula bar"><Caret big /></FormulaButton>
          </FormulaBar>
          <SheetArea>
            <SheetClip>
              <Sheet>
                <colgroup>
                  {columnWidths.map((w, i) => <col key={i} width={w} />)}
                  <col />
                </colgroup>
                <thead>
                  <ColumnRow>
                    <Corner />
                    {letters.map((l) => <ColumnHead key={l} $frozen={l === "B"}>{l}</ColumnHead>)}
                    <ColumnHead />
                  </ColumnRow>
                </thead>
                <tbody>
                  <TitleRow>
                    <RowHead $active>1</RowHead>
                    <TitleCell colSpan={2} $frozen />
                    <TitleCell colSpan={13}>
                      <TitleMarks>
                        <TitleMark $w={47} />
                        <TitleMark $w={58} />
                        <TitleMark $w={57} />
                      </TitleMarks>
                    </TitleCell>
                  </TitleRow>
                  <HeadRow>
                    <RowHead>2</RowHead>
                    {heads.map((h, i) => (
                      <HeadCell key={i} $frozen={i === 1} $start={i === 14}>
                        {i === 7 ? (
                          <Clipped>
                            <Checked text={h} />
                            <TooLong />
                            <TooLong end />
                          </Clipped>
                        ) : (
                          <Checked text={h} />
                        )}
                      </HeadCell>
                    ))}
                  </HeadRow>
                </tbody>
                <DataBody>
                  {rows.map((r, ri) => (
                    <tr key={ri}>
                      <RowHead>{ri + 3}</RowHead>
                      {[...r, ""].map((v, ci) => (
                        <DataCell
                          key={ci}
                          {...cellLook(ri, ci, r[12])}
                          $align={aligns[ci]}
                          $small={smallColumns.includes(ci)}
                          $frozen={ci === 1}
                        >
                          <Checked text={v} />
                        </DataCell>
                      ))}
                    </tr>
                  ))}
                </DataBody>
                <tbody>
                  <TotalRow>
                    <RowHead>13</RowHead>
                    {totals.map((t, i) => (
                      <TotalCell key={i} $frozen={i === 1}>
                        {i === 0 ? <Clipped><TooLong />{t}</Clipped> : t}
                      </TotalCell>
                    ))}
                  </TotalRow>
                </tbody>
                <DataBody>
                  {Array.from({ length: 23 }, (_, i) => (
                    <tr key={i}>
                      <RowHead>{i + 14}</RowHead>
                      <EmptyCell colSpan={2} $frozen />
                      <EmptyCell colSpan={13} />
                    </tr>
                  ))}
                </DataBody>
              </Sheet>
            </SheetClip>
            <VerticalBar><VerticalThumb /></VerticalBar>
          </SheetArea>
          <HorizontalBar><HorizontalThumb /></HorizontalBar>
          <Tabs>
            <TabNav $w={16} aria-label="First sheet"><Icon name="first" size={14} /></TabNav>
            <TabNav $w={16} aria-label="Previous sheet"><Icon name="prev" size={14} /></TabNav>
            <TabNav $w={16} aria-label="Next sheet"><Icon name="next" size={14} /></TabNav>
            <TabNav $w={16} aria-label="Last sheet"><Icon name="last" size={14} /></TabNav>
            <TabNav $w={24} aria-label="Add sheet"><Icon name="addSheet" /></TabNav>
            <Tab $active>Cartera</Tab>
            <Tab>Resumen</Tab>
            <TabLine />
            <Tab>Instrucciones</Tab>
            <TabLine />
          </Tabs>
        </Main>
        <Sidebar>
          <Grip />
          <SidebarButtons>
            <ToolButton aria-label="Sidebar settings"><Icon name="menu" /></ToolButton>
            {["props", "styles", "gallery", "navigator", "functions"].map((n) => (
              <ToolButton key={n} aria-label={n}><Icon name={n} /></ToolButton>
            ))}
          </SidebarButtons>
        </Sidebar>
      </Body>
      <StatusBar>
        <StatusItem $w={21}><Icon name="saved" size={12} /></StatusItem>
        <StatusItem $grow={154}>Sheet 1 of 3</StatusItem>
        <StatusItem $grow={219}>Selected: 1 row, 20 columns</StatusItem>
        <StatusItem $grow={183}>PageStyle_Cartera</StatusItem>
        <StatusItem $grow={170} $center>English (USA)</StatusItem>
        <StatusItem $w={46} />
        <StatusItem $w={31}><Icon name="selection" size={14} /><Icon name="cursor" size={12} /></StatusItem>
        <StatusItem $w={20} />
        <StatusItem $w={20} />
        <StatusItem $grow={185} $center>Average: ; Sum: 0</StatusItem>
        <StatusItem $w={96} $center>
          <ZoomButton aria-label="Zoom out"><svg width="7" height="7" viewBox="0 0 7 7"><path d="M0 3.500h7" stroke="#2b2b2b" strokeWidth="1.500" /></svg></ZoomButton>
          <ZoomSlider type="range" aria-label="Zoom" min={0} max={100} defaultValue={50} />
          <ZoomButton aria-label="Zoom in"><svg width="7" height="7" viewBox="0 0 7 7"><path d="M0 3.500h7M3.500 0v7" stroke="#2b2b2b" strokeWidth="1.500" /></svg></ZoomButton>
        </StatusItem>
        <StatusItem $w={33}>100%</StatusItem>
      </StatusBar>
    </Window>
  );
}
